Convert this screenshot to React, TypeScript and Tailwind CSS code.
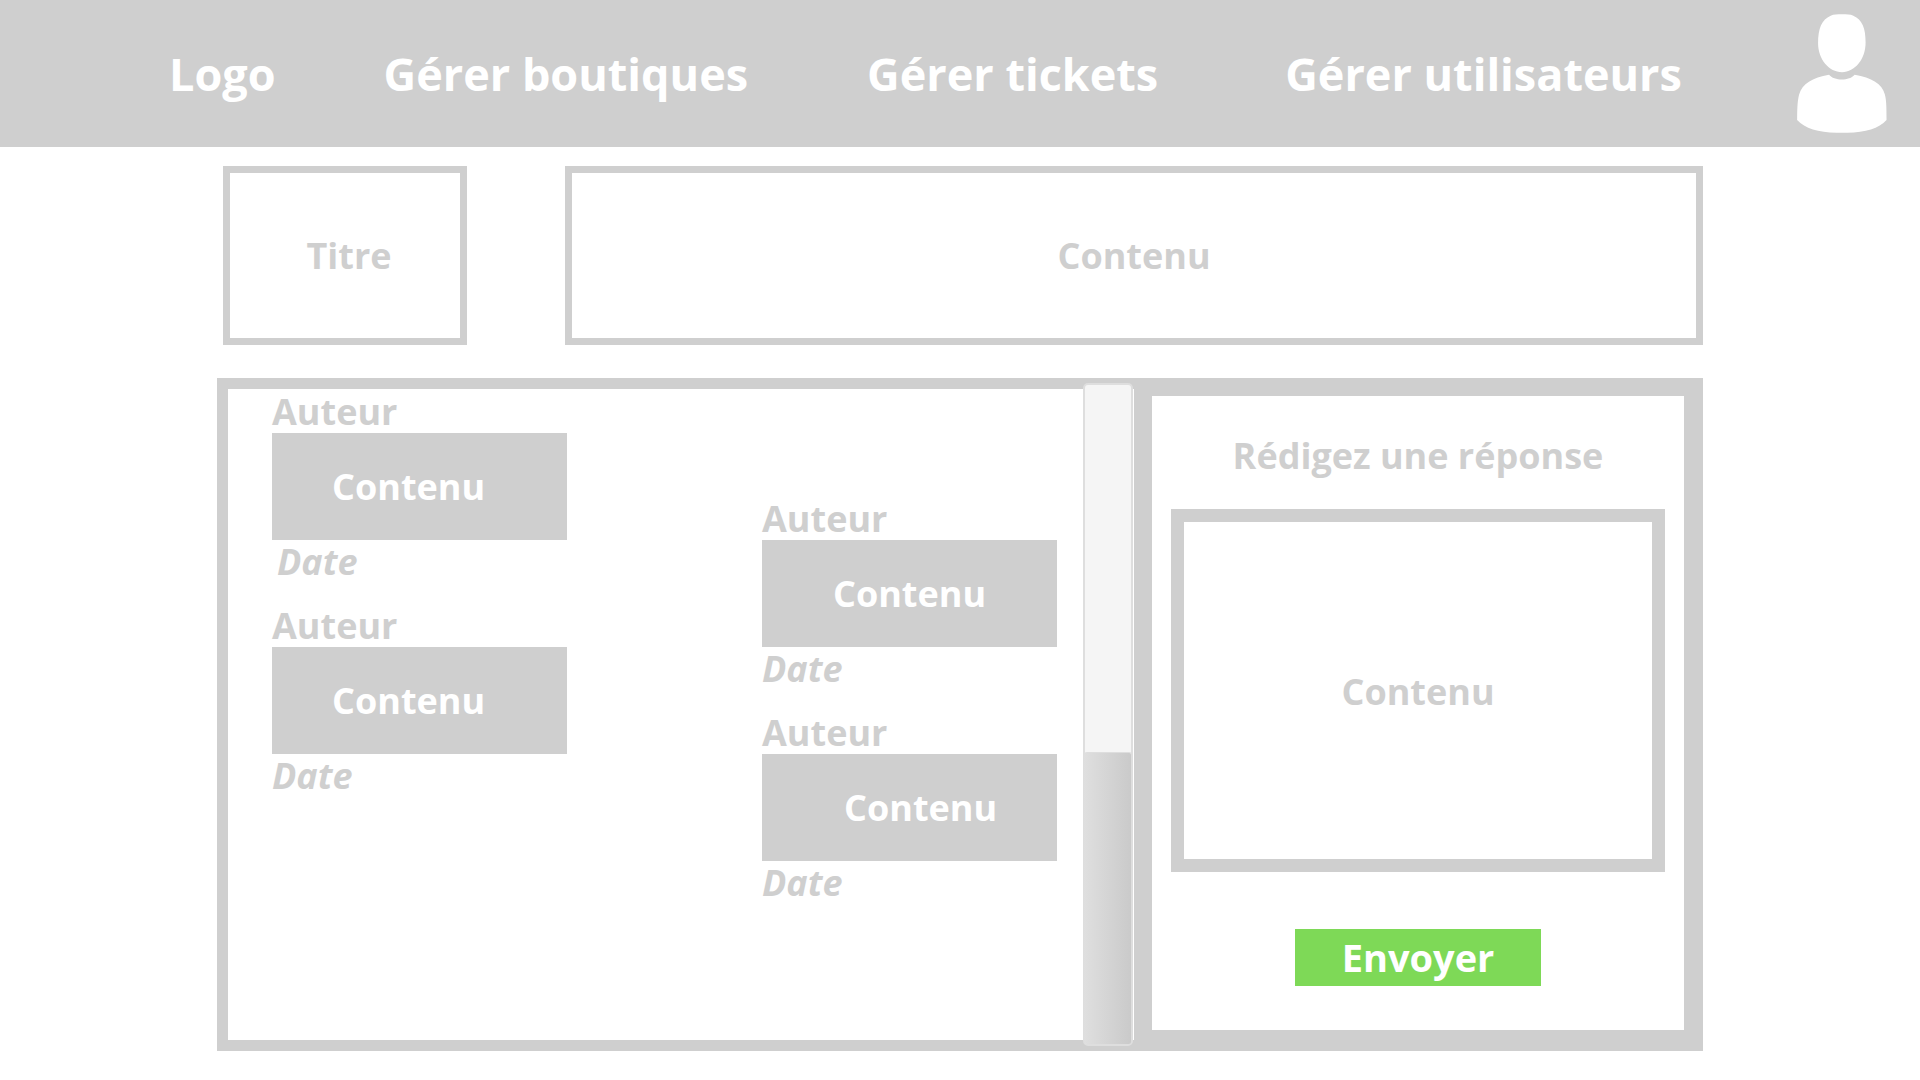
type MessageProps = {
  contentClass: string;
  dateClass?: string;
};

const navItems = [
  { label: "Logo", className: "ml-[169px]" },
  { label: "Gérer boutiques", className: "ml-[108px]" },
  { label: "Gérer tickets", className: "ml-[119px]" },
  { label: "Gérer utilisateurs", className: "ml-[127px]" },
];

function UserIcon() {
  return (
    <svg viewBox="51 42 270 358" className="h-[119px] w-[90px]" fill="currentColor" aria-hidden="true">
      <path d="M186 43C200 43 211 43 220 47C247 59 257 84 257 128C257 178 225 217 186 217C147 217 114 178 114 130C114 84 125 59 152 47C161 43 172 43 186 43Z" />
      <path d="M147 225C162 244 209 244 224 225C275 233 307 253 315 284C319 299 320 316 320 361C297 386 257 399 202 399H170C114 399 75 386 51 361C51 316 53 300 57 284C66 253 97 233 147 225Z" />
    </svg>
  );
}

function Message({ contentClass, dateClass = "" }: MessageProps) {
  return (
    <article>
      <h2 className="pt-0.5 leading-[42px]">Auteur</h2>
      <p className={`flex h-[107px] items-center bg-[#cfcfcf] text-white ${contentClass}`}>Contenu</p>
      <p className={`italic leading-[44px] ${dateClass}`}>
        <time>Date</time>
      </p>
    </article>
  );
}

export default function App() {
  return (
    <div className="flex min-h-screen flex-col bg-white font-['Open_Sans',sans-serif] text-[36px] font-bold text-[#cfcfcf]">
      <header className="flex h-[147px] items-center bg-[#cfcfcf] pr-[33px] text-[45px] text-white">
        <nav className="flex items-center whitespace-nowrap">
          {navItems.map((item) => (
            <a key={item.label} href="#" className={item.className}>
              {item.label}
            </a>
          ))}
        </nav>
        <button type="button" aria-label="Mon compte" className="ml-auto">
          <UserIcon />
        </button>
      </header>

      <main className="flex flex-1 flex-col gap-[33px] px-[217px] pt-[19px] pb-[29px]">
        <div className="flex gap-[98px] pl-[6px]">
          <h1 className="flex h-[179px] w-[244px] items-center justify-center border-[7px] border-[#cfcfcf] pl-2">
            Titre
          </h1>
          <p className="flex h-[179px] flex-1 items-center justify-center border-[7px] border-[#cfcfcf]">
            Contenu
          </p>
        </div>

        <div className="flex flex-1">
          <section
            id="messages"
            aria-label="Messages"
            className="relative flex flex-1 justify-between border-y-[11px] border-l-[11px] border-[#cfcfcf] pr-[77px] pl-[44px]"
          >
            <div className="flex w-[295px] flex-col gap-[19px]">
              <Message contentClass="pl-[60px]" dateClass="pl-[5px]" />
              <Message contentClass="pl-[60px]" />
            </div>
            <div className="flex w-[295px] flex-col gap-[19px] pt-[107px]">
              <Message contentClass="justify-center" />
              <Message contentClass="pl-[82px]" />
            </div>
            <div
              role="scrollbar"
              aria-label="Défilement des messages"
              aria-controls="messages"
              aria-valuenow={100}
              className="absolute -top-[6px] right-px -bottom-[6px] flex w-[50px] flex-col justify-end rounded-[5px] border-2 border-[#dedede] bg-[#f5f5f5]"
            >
              <div className="-mx-px h-[292px] rounded-[3px] border-t border-r border-[#dedede] bg-linear-to-r from-[#dfdfdf] to-[#cacaca]" />
            </div>
          </section>

          <form
            className="flex w-[569px] flex-col items-center border-t-[18px] border-r-[19px] border-b-[21px] border-l-[18px] border-[#cfcfcf] px-[19px]"
            onSubmit={(event) => event.preventDefault()}
          >
            <label htmlFor="reponse" className="mt-[35px] leading-[50px]">
              Rédigez une réponse
            </label>
            <textarea
              id="reponse"
              placeholder="Contenu"
              className="mt-[28px] h-[363px] w-full resize-none border-[13px] border-[#cfcfcf] pt-[145px] text-center leading-[50px] outline-none placeholder:text-[#cfcfcf] placeholder:opacity-100"
            />
            <button
              type="submit"
              className="mt-[57px] flex h-[57px] w-[246px] items-center justify-center bg-[#7ed957] text-[38px] text-white"
            >
              Envoyer
            </button>
          </form>
        </div>
      </main>
    </div>
  );
}
